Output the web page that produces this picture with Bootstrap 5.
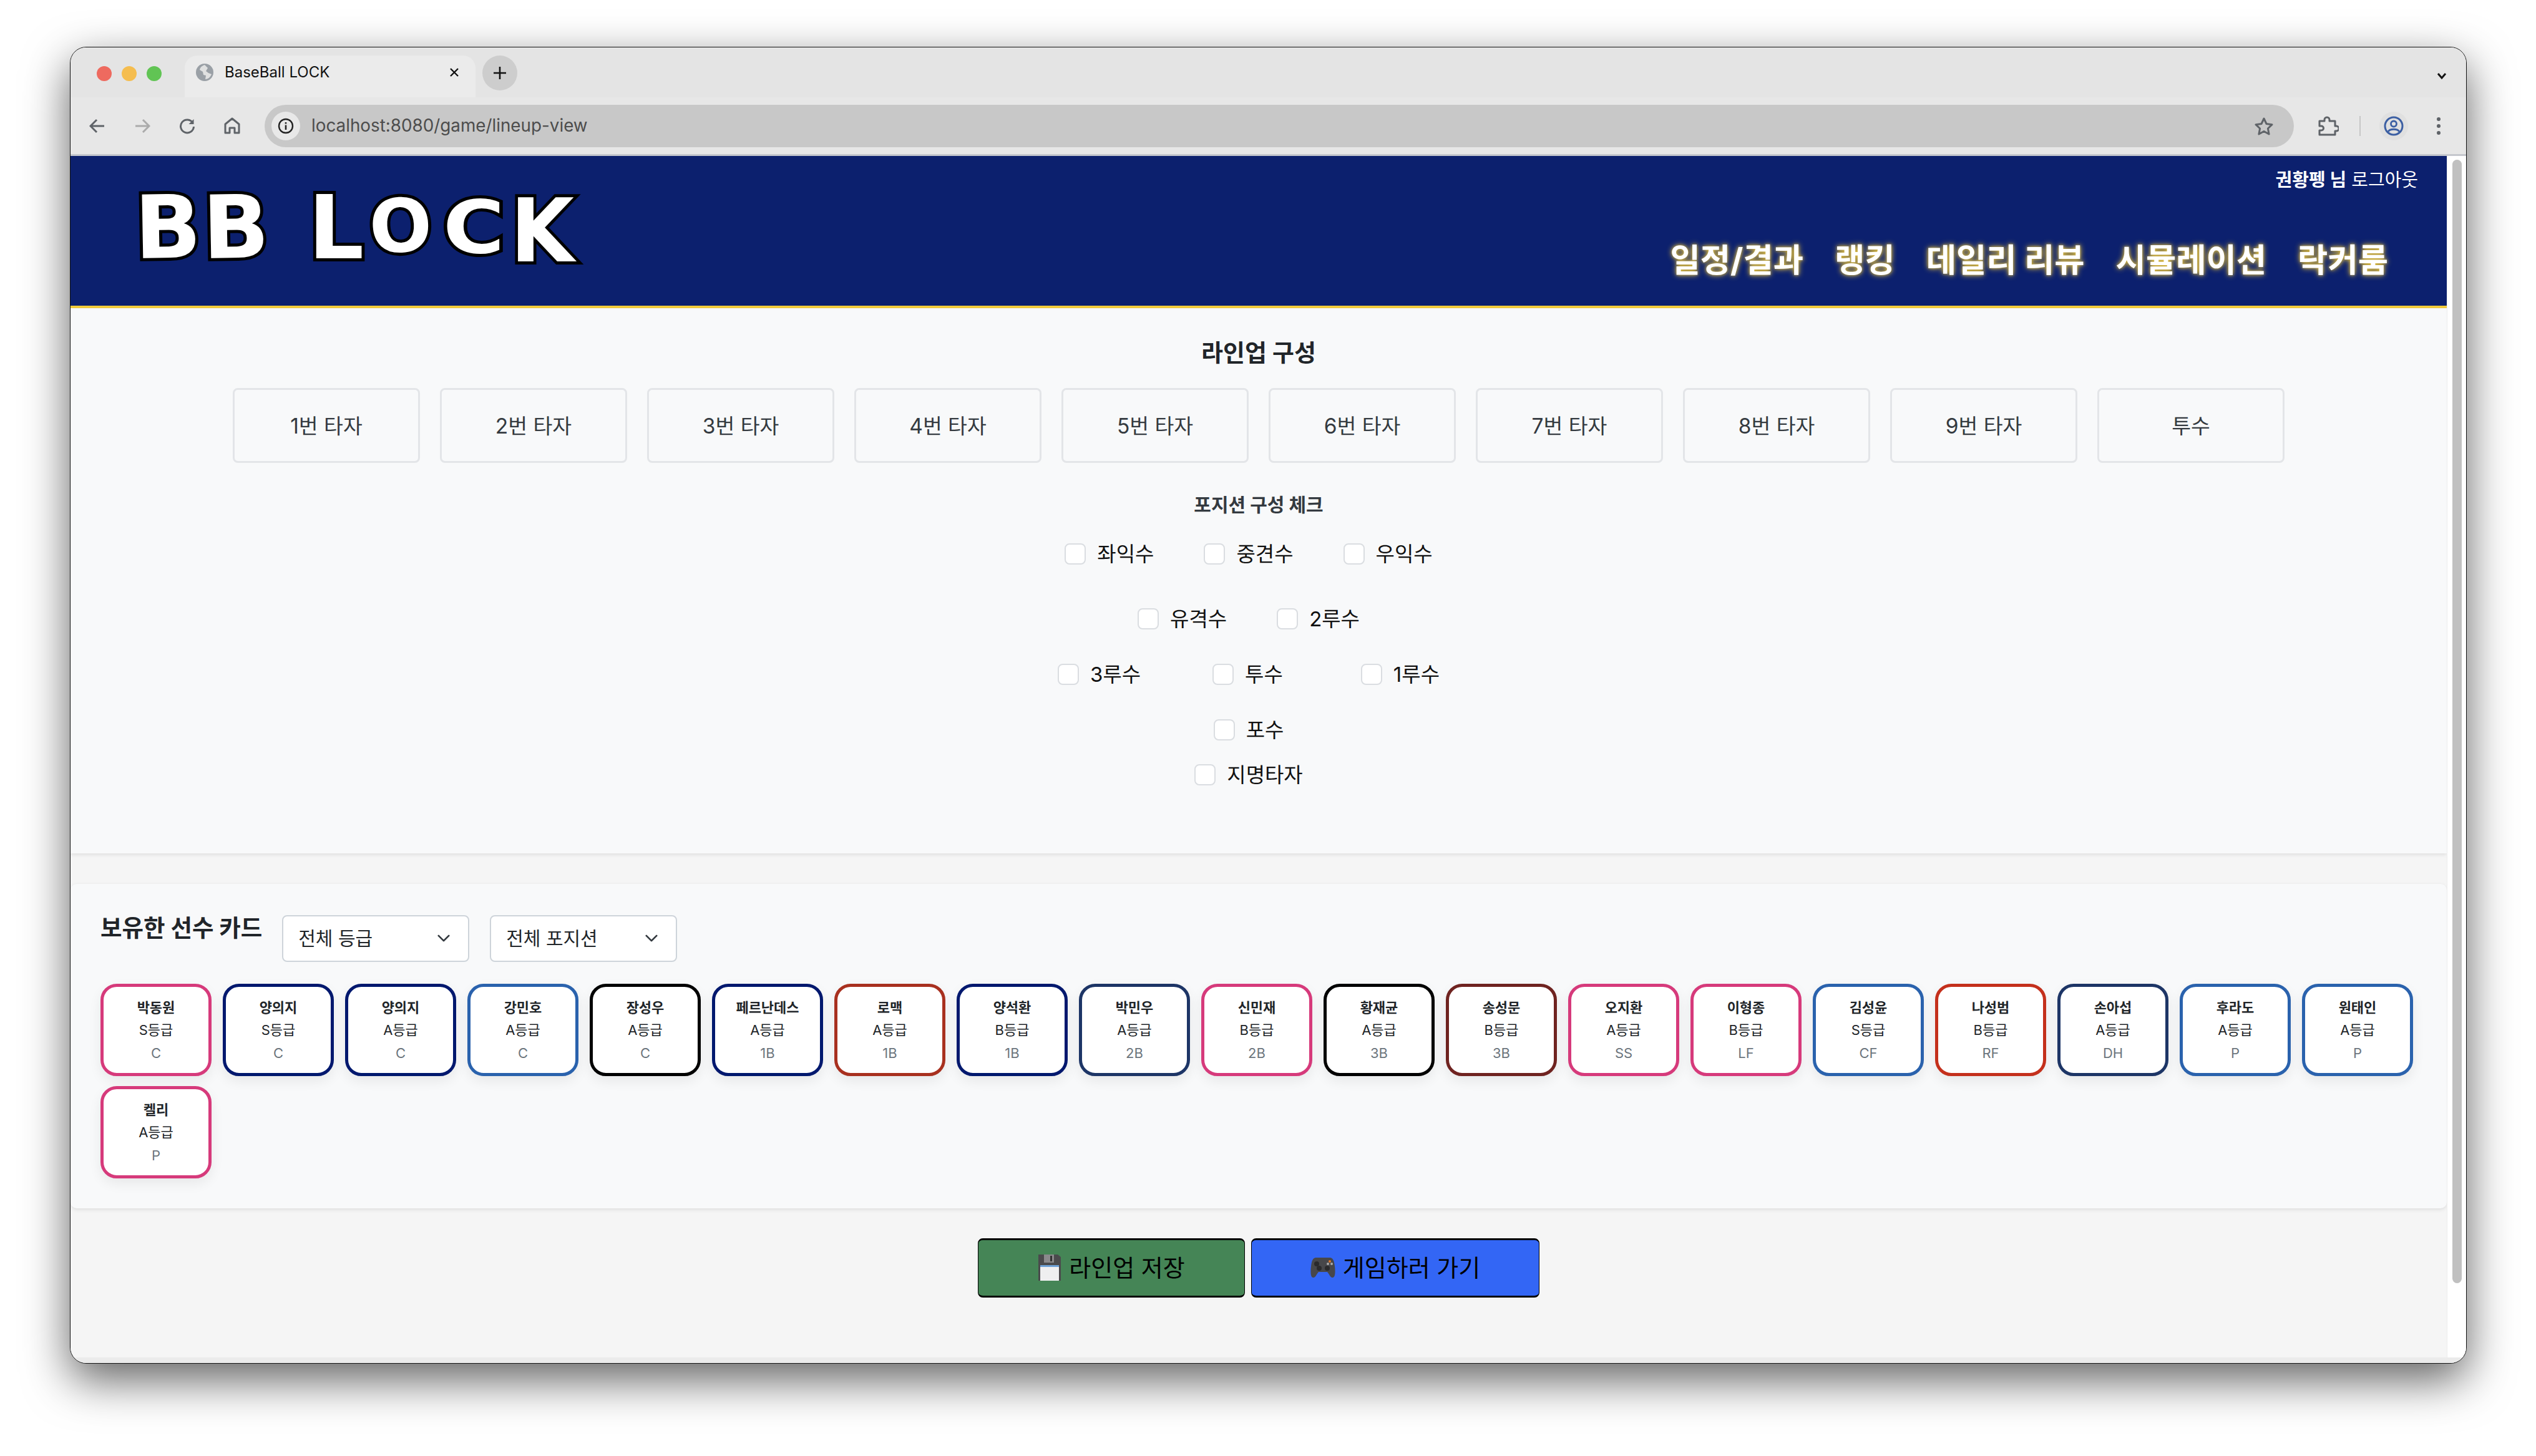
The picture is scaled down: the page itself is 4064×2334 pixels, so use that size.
<!DOCTYPE html>
<html lang="ko">
<head>
<meta charset="utf-8">
<title>BaseBall LOCK</title>
<link href="https://cdn.jsdelivr.net/npm/bootstrap@5.3.0/dist/css/bootstrap.min.css" rel="stylesheet">
<style>
html,body{height:100%;}
body{background:#fff;font-family:Inter,"Noto Sans CJK KR",sans-serif;overflow:hidden;padding:75px 111px 148px 112px;color:#212529;}
.win{height:2111px;border:1px solid #111;border-radius:26px;overflow:hidden;box-shadow:0 26px 72px rgba(0,0,0,.62);background:#f5f5f5;}
.tabstrip{height:80px;background:#e4e4e4;padding:13px 0 0 0;}
.lights{width:183px;padding-left:42px;gap:16px;padding-bottom:26px;}
.light{width:24px;height:24px;border-radius:50%;}
.chrome-tab{width:466px;height:67px;background:#ebebeb;border-radius:20px 20px 0 0;padding:0 18px 14px 18px;font-size:24px;color:#111;}
.chrome-tab span{margin-left:18px;}
.newtab{width:56px;height:56px;border-radius:50%;background:#cdcdcd;margin:0 0 11px 11px;}
.tabchev{margin:0 31px 28px auto;}
.toolbar{height:94px;background:#e7e7e7;border-bottom:3px solid #c5c7cd;padding-top:1px;}
.navicons{width:311px;padding-left:30px;gap:46px;}
.omni{width:3252px;height:68px;background:#c8c8c8;border-radius:34px;padding:0 32px 0 11px;font-size:27.8px;color:#4d4d4d;}
.infoc{width:46px;height:46px;border-radius:50%;background:#e8e8e8;margin-right:18px;}
.tools{padding-left:38px;}
.profilec{width:46px;height:46px;border-radius:50%;background:#e0e0e0;}
.divi{width:2px;height:32px;background:#c6c6c6;margin:0 30px 0 33px;}
.morebtn{margin-left:45px;}
.viewport{height:1927px;}
.winfoot{height:9px;background:#ebebeb;}
.page{width:3810px;background:#f5f5f5;}
.sbar{width:31px;background:#fff;padding:6px 7px 0 8px;border-left:1px solid #ececec;}
.thumb{height:1801px;background:#c0c0c0;border-radius:8px;}
.hdr{height:244px;background:#0c206e;border-bottom:4px solid #f4cd3c;padding:0 46px 0 0;}
.logo{font-family:"DejaVu Sans",sans-serif;font-weight:700;color:#fff;font-size:140px;line-height:1;padding:46px 0 0 104px;white-space:nowrap;}
.logo span{display:inline-block;-webkit-text-stroke:10px #000;paint-order:stroke fill;transform-origin:left bottom;}
.logo span:nth-child(1){width:109px;transform:rotate(-1deg);}
.logo span:nth-child(2){width:168px;transform:rotate(-1deg);}
.logo span:nth-child(3){width:101px;}
.logo span:nth-child(4){width:115px;font-size:118px;transform:translateY(-8px) rotate(-3deg);}
.logo span:nth-child(5){width:108px;font-size:118px;transform:translateY(-9px) scaleX(1.14);}
.logo span:nth-child(6){transform:translateY(5px) scaleX(.94);}
.userline{font-size:29px;color:#fff;line-height:40px;padding-top:19px;margin-bottom:75px;text-align:right;}
.mainnav{gap:50px;padding-right:48px;font-size:52.5px;font-weight:700;line-height:66px;}
.mainnav a{color:#fff;text-decoration:none;text-shadow:0 0 10px #f4cd3c,0 0 4px rgba(244,205,60,.6);}
.panel1{height:874px;background:#f8f9fa;padding-top:41px;box-shadow:0 2px 6px rgba(0,0,0,.1);}
.ttl{font-size:38px;font-weight:700;line-height:60px;margin:0 0 27px;}
.slots{gap:32px;}
.slotbox{width:300px;height:120px;border:3px solid #e3e5e8;border-radius:8px;font-size:33.5px;color:#343a40;padding-top:2px;}
.ttl2{font-size:30px;font-weight:700;line-height:50px;margin:42px 0 34px;color:#343a40;}
.chkrow{padding-right:32px;height:40px;gap:80px;}
.chkrow label{font-size:33px;color:#111;margin-left:18px;line-height:40px;}
.chkrow input.form-check-input{width:34px;height:34px;margin:0;border:2px solid #dadde1;border-radius:8px;}
.r2{margin-top:64px;}.r3,.r4{margin-top:49px;}.r5{margin-top:32px;}
.r3{gap:0;}.r3>:first-child{margin-right:115px;}.r3>:last-child{margin-left:125px;}
.panel2{height:520px;margin-top:49px;background:#f8f9fa;border-radius:10px;padding:50px 0 0 48px;box-shadow:0 2px 6px rgba(0,0,0,.1);}
.secrow{height:75px;}
.secttl{font-size:37.5px;font-weight:700;line-height:50px;margin:-4px 32px 0 0;}
.filter{width:300px;height:75px;font-size:30px;padding:0 24px;border:2px solid #ced4da;border-radius:8px;margin-right:33px;background-size:30px 22px;background-position:right 24px center;color:#212529;}
.cards{gap:16px 18px;margin-top:35px;}
.pcard{width:178px;height:148px;border:5px solid;border-radius:26px;background:#fff;box-shadow:0 8px 20px rgba(0,0,0,.07);font-size:22px;line-height:36.5px;padding-top:15px;}
.pname{font-weight:700;}
.ppos{color:#6c757d;}
.bt-p{border-color:#d63a7b}.bt-n{border-color:#00186e}.bt-b{border-color:#2a62ad}.bt-k{border-color:#000}
.bt-r{border-color:#a8301f}.bt-d{border-color:#1d3566}.bt-m{border-color:#6f2320}.bt-o{border-color:#c4301c}
.actions{gap:10px;margin-top:48px;}
.actbtn{height:95px;border:1px solid #000;border-top-width:3px;border-bottom-width:3px;border-radius:8px;font-size:38px;color:#000;gap:12px;}
.actbtn.g{width:428px;background:#458556;}
.actbtn.u{width:462px;background:#3366f5;}
.actbtn.g:hover{background:#458556;color:#000;border-color:#000}
.actbtn.u:hover{background:#3366f5;color:#000;border-color:#000}
</style>
</head>
<body>
<div class="win d-flex flex-column">
  <div class="tabstrip d-flex align-items-end">
    <div class="lights d-flex align-items-center">
      <span class="light" style="background:#ee6a5f"></span><span class="light" style="background:#f5bd4f"></span><span class="light" style="background:#61c454"></span>
    </div>
    <div class="chrome-tab d-flex align-items-center">
      <svg width="28" height="28" viewBox="0 0 28 28"><circle cx="14" cy="14" r="14" fill="#9aa0a6"/><path d="M14 2c-3 1-7 3-8 8l5 3 1 5 4 1-1 6c4 0 8-3 10-8l-5-2-4-3 3-5z" fill="#e8e8e8" opacity=".9"/></svg>
      <span>BaseBall LOCK</span>
      <svg class="ms-auto me-2" width="16" height="16" viewBox="0 0 16 16"><path d="M2 2l12 12M14 2L2 14" stroke="#111" stroke-width="2.4"/></svg>
    </div>
    <div class="newtab d-flex align-items-center justify-content-center">
      <svg width="22" height="22" viewBox="0 0 22 22"><path d="M11 1v20M1 11h20" stroke="#111" stroke-width="2.6"/></svg>
    </div>
    <svg class="tabchev" width="16" height="12" viewBox="0 0 16 12"><path d="M2 2l6 7 6-7" fill="none" stroke="#111" stroke-width="3"/></svg>
  </div>
  <div class="toolbar d-flex align-items-center">
    <div class="navicons d-flex align-items-center">
      <svg width="26" height="24" viewBox="0 0 26 24"><path d="M24 12H3M12 2L2 12l10 10" fill="none" stroke="#5f6368" stroke-width="3"/></svg>
      <svg width="26" height="24" viewBox="0 0 26 24"><path d="M2 12h21M14 2l10 10-10 10" fill="none" stroke="#ababab" stroke-width="3"/></svg>
      <svg width="26" height="26" viewBox="0 0 26 26"><path d="M22 8a10.500 10.500 0 1 0 1.500 6" fill="none" stroke="#5f6368" stroke-width="3"/><path d="M23.500 2v8h-8z" fill="#5f6368"/></svg>
      <svg width="26" height="27" viewBox="0 0 26 27"><path d="M2 11L13 2l11 9v14h-7v-8H9v8H2z" fill="none" stroke="#5f6368" stroke-width="3" stroke-linejoin="round"/></svg>
    </div>
    <div class="omni d-flex align-items-center">
      <span class="infoc d-flex align-items-center justify-content-center">
        <svg width="26" height="26" viewBox="0 0 26 26"><circle cx="13" cy="13" r="11" fill="none" stroke="#222" stroke-width="2.400"/><path d="M13 11.500v7.500M13 7v2.600" stroke="#222" stroke-width="2.600"/></svg>
      </span>
      <span>localhost:8080/game/lineup-view</span>
      <svg class="ms-auto" width="32" height="30" viewBox="0 0 32 30"><path d="M16 3l4 8.500 9 1.200-6.600 6.300 1.700 9L16 23.500 7.900 28l1.700-9L3 12.700l9-1.200z" fill="none" stroke="#5f6368" stroke-width="3" stroke-linejoin="round"/></svg>
    </div>
    <div class="tools d-flex align-items-center">
      <svg width="34" height="32" viewBox="0 0 34 32"><path d="M3 8h8V6a4 4 0 0 1 8 0v2h9v8h2a4 4 0 0 1 0 8h-2v6H3v-7h3a3.500 3.500 0 0 0 0-7H3z" fill="none" stroke="#5f6368" stroke-width="3" stroke-linejoin="round"/></svg>
      <span class="divi"></span>
      <span class="profilec d-flex align-items-center justify-content-center">
        <svg width="32" height="32" viewBox="0 0 32 32"><circle cx="16" cy="16" r="14" fill="none" stroke="#3c5fa3" stroke-width="3"/><circle cx="16" cy="12.500" r="4.500" fill="none" stroke="#3c5fa3" stroke-width="2.800"/><path d="M7 25c3-5 15-5 18 0" fill="none" stroke="#3c5fa3" stroke-width="2.800"/></svg>
      </span>
      <svg class="morebtn" width="8" height="30" viewBox="0 0 8 30"><circle cx="4" cy="4" r="3" fill="#5f6368"/><circle cx="4" cy="15" r="3" fill="#5f6368"/><circle cx="4" cy="26" r="3" fill="#5f6368"/></svg>
    </div>
  </div>
  <div class="viewport d-flex">
    <div class="page">
      <header class="hdr d-flex justify-content-between">
        <div class="logo"><span>B</span><span>B</span><span>L</span><span>O</span><span>C</span><span>K</span></div>
        <div>
          <div class="userline"><b>권황펭 님</b> 로그아웃</div>
          <nav class="mainnav d-flex">
            <a href="#">일정/결과</a><a href="#">랭킹</a><a href="#">데일리 리뷰</a><a href="#">시뮬레이션</a><a href="#">락커룸</a>
          </nav>
        </div>
      </header>
      <section class="panel1">
        <h4 class="ttl text-center">라인업 구성</h4>
        <div class="slots d-flex justify-content-center">
          <div class="slotbox d-flex align-items-center justify-content-center">1번 타자</div>
          <div class="slotbox d-flex align-items-center justify-content-center">2번 타자</div>
          <div class="slotbox d-flex align-items-center justify-content-center">3번 타자</div>
          <div class="slotbox d-flex align-items-center justify-content-center">4번 타자</div>
          <div class="slotbox d-flex align-items-center justify-content-center">5번 타자</div>
          <div class="slotbox d-flex align-items-center justify-content-center">6번 타자</div>
          <div class="slotbox d-flex align-items-center justify-content-center">7번 타자</div>
          <div class="slotbox d-flex align-items-center justify-content-center">8번 타자</div>
          <div class="slotbox d-flex align-items-center justify-content-center">9번 타자</div>
          <div class="slotbox d-flex align-items-center justify-content-center">투수</div>
        </div>
        <h5 class="ttl2 text-center">포지션 구성 체크</h5>
        <div class="chkrow d-flex justify-content-center">
          <div class="d-flex align-items-center"><input class="form-check-input" type="checkbox" id="c1"><label for="c1">좌익수</label></div>
          <div class="d-flex align-items-center"><input class="form-check-input" type="checkbox" id="c2"><label for="c2">중견수</label></div>
          <div class="d-flex align-items-center"><input class="form-check-input" type="checkbox" id="c3"><label for="c3">우익수</label></div>
        </div>
        <div class="chkrow r2 d-flex justify-content-center">
          <div class="d-flex align-items-center"><input class="form-check-input" type="checkbox" id="c4"><label for="c4">유격수</label></div>
          <div class="d-flex align-items-center"><input class="form-check-input" type="checkbox" id="c5"><label for="c5">2루수</label></div>
        </div>
        <div class="chkrow r3 d-flex justify-content-center">
          <div class="d-flex align-items-center"><input class="form-check-input" type="checkbox" id="c6"><label for="c6">3루수</label></div>
          <div class="d-flex align-items-center"><input class="form-check-input" type="checkbox" id="c7"><label for="c7">투수</label></div>
          <div class="d-flex align-items-center"><input class="form-check-input" type="checkbox" id="c8"><label for="c8">1루수</label></div>
        </div>
        <div class="chkrow r4 d-flex justify-content-center">
          <div class="d-flex align-items-center"><input class="form-check-input" type="checkbox" id="c9"><label for="c9">포수</label></div>
        </div>
        <div class="chkrow r5 d-flex justify-content-center">
          <div class="d-flex align-items-center"><input class="form-check-input" type="checkbox" id="c10"><label for="c10">지명타자</label></div>
        </div>
      </section>
      <section class="panel2">
        <div class="secrow d-flex align-items-start">
          <h5 class="secttl">보유한 선수 카드</h5>
          <select class="form-select filter"><option>전체 등급</option></select>
          <select class="form-select filter"><option>전체 포지션</option></select>
        </div>
        <div class="cards d-flex flex-wrap">
          <div class="pcard bt-p text-center"><div class="pname">박동원</div><div>S등급</div><div class="ppos">C</div></div>
          <div class="pcard bt-n text-center"><div class="pname">양의지</div><div>S등급</div><div class="ppos">C</div></div>
          <div class="pcard bt-n text-center"><div class="pname">양의지</div><div>A등급</div><div class="ppos">C</div></div>
          <div class="pcard bt-b text-center"><div class="pname">강민호</div><div>A등급</div><div class="ppos">C</div></div>
          <div class="pcard bt-k text-center"><div class="pname">장성우</div><div>A등급</div><div class="ppos">C</div></div>
          <div class="pcard bt-n text-center"><div class="pname">페르난데스</div><div>A등급</div><div class="ppos">1B</div></div>
          <div class="pcard bt-r text-center"><div class="pname">로맥</div><div>A등급</div><div class="ppos">1B</div></div>
          <div class="pcard bt-n text-center"><div class="pname">양석환</div><div>B등급</div><div class="ppos">1B</div></div>
          <div class="pcard bt-d text-center"><div class="pname">박민우</div><div>A등급</div><div class="ppos">2B</div></div>
          <div class="pcard bt-p text-center"><div class="pname">신민재</div><div>B등급</div><div class="ppos">2B</div></div>
          <div class="pcard bt-k text-center"><div class="pname">황재균</div><div>A등급</div><div class="ppos">3B</div></div>
          <div class="pcard bt-m text-center"><div class="pname">송성문</div><div>B등급</div><div class="ppos">3B</div></div>
          <div class="pcard bt-p text-center"><div class="pname">오지환</div><div>A등급</div><div class="ppos">SS</div></div>
          <div class="pcard bt-p text-center"><div class="pname">이형종</div><div>B등급</div><div class="ppos">LF</div></div>
          <div class="pcard bt-b text-center"><div class="pname">김성윤</div><div>S등급</div><div class="ppos">CF</div></div>
          <div class="pcard bt-o text-center"><div class="pname">나성범</div><div>B등급</div><div class="ppos">RF</div></div>
          <div class="pcard bt-d text-center"><div class="pname">손아섭</div><div>A등급</div><div class="ppos">DH</div></div>
          <div class="pcard bt-b text-center"><div class="pname">후라도</div><div>A등급</div><div class="ppos">P</div></div>
          <div class="pcard bt-b text-center"><div class="pname">원태인</div><div>A등급</div><div class="ppos">P</div></div>
          <div class="pcard bt-p text-center"><div class="pname">켈리</div><div>A등급</div><div class="ppos">P</div></div>
        </div>
      </section>
      <div class="actions d-flex justify-content-center">
        <button class="btn actbtn g d-flex align-items-center justify-content-center" type="button">
          <svg width="38" height="42" viewBox="0 0 38 42"><path d="M1 0h31l5 4v38H1z" fill="#4a4a4c"/><rect x="10" y="0" width="16" height="13" fill="#8a8a8c"/><rect x="20" y="2" width="3" height="9" fill="#333"/><rect x="4" y="17" width="30" height="25" fill="#efeff0"/><rect x="4" y="17" width="30" height="3" fill="#6fa2d8"/></svg>
          <span>라인업 저장</span>
        </button>
        <button class="btn actbtn u d-flex align-items-center justify-content-center" type="button">
          <svg width="40" height="34" viewBox="0 0 40 34"><path d="M9 1h22c5 0 7 5 8 14 1 8 1 17-3 18-4 1-6-6-9-9H13c-3 3-5 10-9 9-4-1-4-10-3-18C2 6 4 1 9 1z" fill="#47474a"/><circle cx="10" cy="11" r="4" fill="#2a2a2c"/><circle cx="27" cy="18" r="4" fill="#2a2a2c"/><circle cx="14" cy="18" r="4" fill="#2a2a2c"/><circle cx="31" cy="7" r="2" fill="#e0762b"/><circle cx="34" cy="11" r="2" fill="#aaa"/><circle cx="28" cy="11" r="2" fill="#aaa"/></svg>
          <span>게임하러 가기</span>
        </button>
      </div>
    </div>
    <div class="sbar"><div class="thumb"></div></div>
  </div>
  <div class="winfoot"></div>
</div>
<script src="https://cdn.jsdelivr.net/npm/bootstrap@5.3.0/dist/js/bootstrap.bundle.min.js"></script>
</body>
</html>
